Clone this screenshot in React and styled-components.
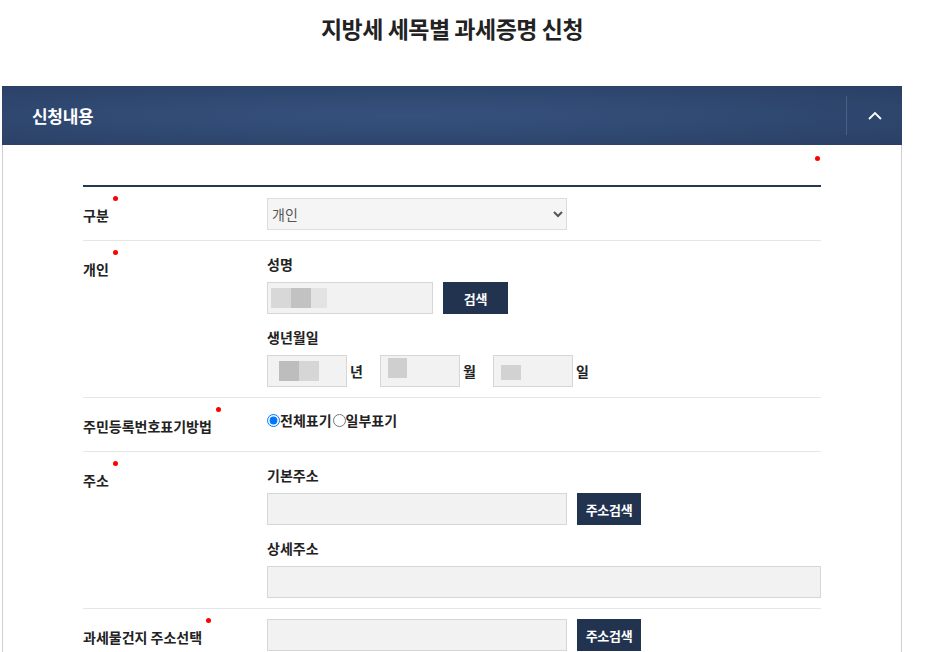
import React from "react";
import styled, { createGlobalStyle } from "styled-components";

const GlobalStyle = createGlobalStyle`
  * { box-sizing: border-box; }
  body {
    margin: 0;
    background: #fff;
    font-family: "Noto Sans CJK KR", "Noto Sans", sans-serif;
    color: #222;
  }
`;

const Page = styled.div`
  width: 900px;
  margin-left: 2px;
`;

const Title = styled.h1`
  margin: 0;
  padding-top: 13px;
  height: 86px;
  text-align: center;
  font-size: 23px;
  line-height: 30px;
  font-weight: 700;
  letter-spacing: -0.5px;
  color: #222;
`;

const PanelHead = styled.div`
  height: 59px;
  display: flex;
  align-items: center;
  background: radial-gradient(ellipse at 45% 50%, #35517c 0%, #304a73 45%, #2b3f64 100%);
  color: #fff;
`;

const PanelTitle = styled.h2`
  flex: 1;
  margin: 0;
  padding-left: 30px;
  font-size: 17px;
  font-weight: 700;
  letter-spacing: -0.3px;
`;

const ToggleBtn = styled.button`
  width: 56px;
  height: 39px;
  display: flex;
  align-items: center;
  justify-content: center;
  padding: 0;
  border: 0;
  border-left: 1px solid rgba(255, 255, 255, 0.14);
  background: transparent;
  color: #fff;
`;

const PanelBody = styled.div`
  border: 1px solid #cfcfcf;
  border-top: 0;
  padding: 0 80px;
`;

const NoteRow = styled.div`
  height: 40px;
  display: flex;
  justify-content: flex-end;
  padding-top: 11px;
`;

const Dot = styled.span`
  width: 5px;
  height: 5px;
  margin-right: 1px;
  border-radius: 50%;
  background: #f00;
`;

const Form = styled.div`
  border-top: 2px solid #263756;
`;

const Row = styled.div`
  display: grid;
  grid-template-columns: 184px 1fr;
  border-bottom: 1px solid #e6e6e6;
`;

const Label = styled.div`
  padding: 18px 0 15px;
  font-size: 14px;
  line-height: 20px;
  font-weight: 700;
  color: #222;
`;

const Required = styled.span`
  position: relative;
  &::after {
    content: "";
    position: absolute;
    left: calc(100% + 4px);
    top: -9px;
    width: 5px;
    height: 5px;
    border-radius: 50%;
    background: #f00;
  }
`;

const Cell = styled.div`
  padding: ${(p) => (p.$top ? "11px 0 10px" : "10px 0")};
  display: flex;
  flex-direction: column;
  gap: 10px;
`;

const Group = styled.div``;

const SubLabel = styled.div`
  margin: 3px 0 8px;
  font-size: 14px;
  line-height: 20px;
  font-weight: 700;
  color: #222;
`;

const Line = styled.div`
  display: flex;
  align-items: center;
`;

const Select = styled.select`
  width: 300px;
  height: 32px;
  padding: 0 8px 0 0;
  background: #f5f5f5;
  border: 1px solid #ddd;
  border-radius: 0;
  font-family: inherit;
  font-size: 14px;
  color: #555;
  outline: none;
`;

const InputBox = styled.div`
  position: relative;
  width: ${(p) => p.$w}px;
  height: 32px;
  flex: none;
`;

const Input = styled.input`
  width: 100%;
  height: 100%;
  padding: 0 8px;
  background: #f2f2f2;
  border: 1px solid #d6d6d6;
  border-radius: 0;
  font-family: inherit;
  font-size: 14px;
  outline: none;
`;

const Blur = styled.span`
  position: absolute;
  left: ${(p) => p.$x}px;
  top: ${(p) => p.$y}px;
  display: flex;
  pointer-events: none;
`;

const BlurCell = styled.span`
  width: ${(p) => p.$w}px;
  height: ${(p) => p.$h || 20}px;
  background: ${(p) => p.$c};
`;

const Btn = styled.button`
  flex: none;
  height: 32px;
  width: ${(p) => p.$w}px;
  margin-left: 10px;
  padding: 0;
  border: 0;
  background: #22334f;
  color: #fff;
  font-family: inherit;
  font-size: 13px;
  font-weight: 700;
  letter-spacing: -0.3px;
`;

const Unit = styled.span`
  width: 13px;
  margin: 0 17px 0 3px;
  font-size: 14px;
  font-weight: 700;
  color: #222;
`;

const Radios = styled.div`
  margin-top: 2px;
  display: flex;
  align-items: center;
  height: 20px;
`;

const RadioLabel = styled.label`
  display: flex;
  align-items: center;
  margin-right: 1px;
  font-size: 14px;
  font-weight: 700;
  color: #222;

  input {
    width: 13px;
    height: 13px;
    margin: 0;
  }
`;

const ChevronUp = () => (
  <svg width="14" height="9" viewBox="0 0 14 9" fill="none">
    <polyline points="1,8 7,2 13,8" stroke="#fff" strokeWidth="1.8" />
  </svg>
);

export default function App() {
  return (
    <Page>
      <GlobalStyle />
      <Title>지방세 세목별 과세증명 신청</Title>

      <PanelHead>
        <PanelTitle>신청내용</PanelTitle>
        <ToggleBtn aria-label="접기">
          <ChevronUp />
        </ToggleBtn>
      </PanelHead>

      <PanelBody>
        <NoteRow>
          <Dot />
        </NoteRow>

        <Form>
          <Row>
            <Label>
              <Required>구분</Required>
            </Label>
            <Cell $top>
              <Select defaultValue="개인">
                <option>개인</option>
                <option>법인</option>
              </Select>
            </Cell>
          </Row>

          <Row>
            <Label>
              <Required>개인</Required>
            </Label>
            <Cell>
              <Group>
                <SubLabel>성명</SubLabel>
                <Line>
                  <InputBox $w={166}>
                    <Input />
                    <Blur $x={4} $y={6}>
                      <BlurCell $w={20} $c="#d8d8d8" />
                      <BlurCell $w={20} $c="#c2c2c2" />
                      <BlurCell $w={16} $c="#e3e3e3" />
                    </Blur>
                  </InputBox>
                  <Btn $w={65}>검색</Btn>
                </Line>
              </Group>
              <Group>
                <SubLabel>생년월일</SubLabel>
                <Line>
                  <InputBox $w={80}>
                    <Input />
                    <Blur $x={12} $y={6}>
                      <BlurCell $w={20} $c="#bdbdbd" />
                      <BlurCell $w={20} $c="#d6d6d6" />
                    </Blur>
                  </InputBox>
                  <Unit>년</Unit>
                  <InputBox $w={80}>
                    <Input />
                    <Blur $x={8} $y={3}>
                      <BlurCell $w={19} $c="#cfcfcf" />
                    </Blur>
                  </InputBox>
                  <Unit>월</Unit>
                  <InputBox $w={80}>
                    <Input />
                    <Blur $x={8} $y={10}>
                      <BlurCell $w={20} $h={15} $c="#d2d2d2" />
                    </Blur>
                  </InputBox>
                  <Unit>일</Unit>
                </Line>
              </Group>
            </Cell>
          </Row>

          <Row>
            <Label>
              <Required>주민등록번호표기방법</Required>
            </Label>
            <Cell>
              <Radios>
                <RadioLabel>
                  <input type="radio" name="rrn" defaultChecked />
                  전체표기
                </RadioLabel>
                <RadioLabel>
                  <input type="radio" name="rrn" />
                  일부표기
                </RadioLabel>
              </Radios>
            </Cell>
          </Row>

          <Row>
            <Label>
              <Required>주소</Required>
            </Label>
            <Cell>
              <Group>
                <SubLabel>기본주소</SubLabel>
                <Line>
                  <InputBox $w={300}>
                    <Input />
                  </InputBox>
                  <Btn $w={64}>주소검색</Btn>
                </Line>
              </Group>
              <Group>
                <SubLabel>상세주소</SubLabel>
                <Line>
                  <InputBox $w={554}>
                    <Input />
                  </InputBox>
                </Line>
              </Group>
            </Cell>
          </Row>

          <Row>
            <Label>
              <Required>과세물건지 주소선택</Required>
            </Label>
            <Cell>
              <Line>
                <InputBox $w={300}>
                  <Input />
                </InputBox>
                <Btn $w={64}>주소검색</Btn>
              </Line>
            </Cell>
          </Row>
        </Form>
      </PanelBody>
    </Page>
  );
}
